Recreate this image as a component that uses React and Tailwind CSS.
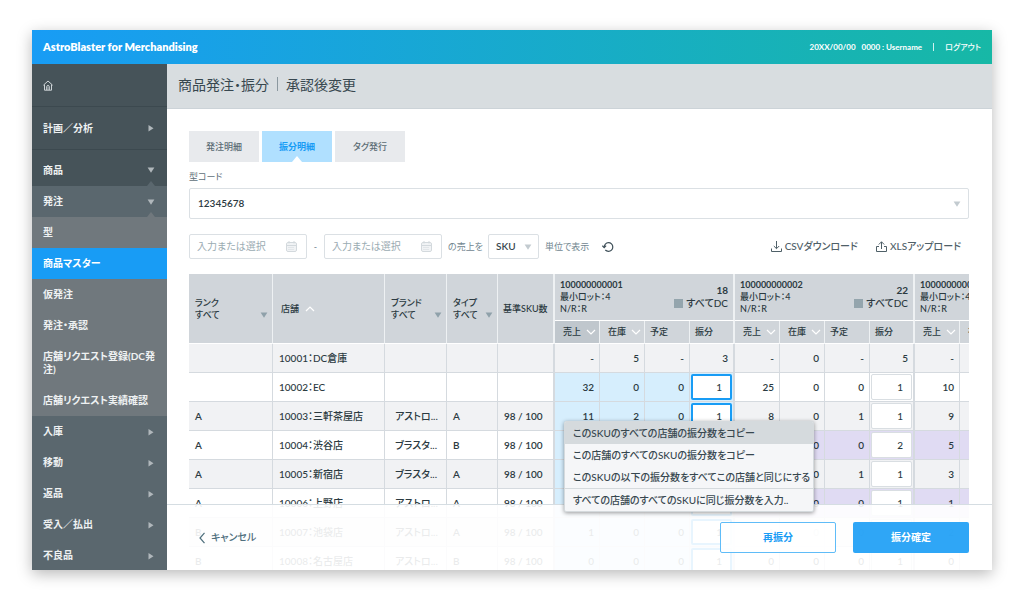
import React from "react";

const NAV = [
  { label: "計画／分析", arrow: "right", level: 0 },
  { label: "商品", arrow: "down", level: 1 },
  { label: "発注", arrow: "down", level: 2 },
  { label: "型", level: 3 },
  { label: "商品マスター", level: 3, active: true },
  { label: "仮発注", level: 3 },
  { label: "発注・承認", level: 3 },
  { label: "店舗リクエスト登録(DC発注)", level: 3 },
  { label: "店舗リクエスト実績確認", level: 3 },
  { label: "入庫", arrow: "right", level: 2 },
  { label: "移動", arrow: "right", level: 2 },
  { label: "返品", arrow: "right", level: 2 },
  { label: "受入／払出", arrow: "right", level: 2 },
  { label: "不良品", arrow: "right", level: 2 },
];

const LEVEL = {
  0: "min-h-[43px] bg-[#465359] border-b border-[#3c494f]",
  1: "min-h-[36px] pt-1 bg-[#465359]",
  2: "min-h-[31px] bg-[#5a676e]",
  3: "min-h-[31px] py-[9px] bg-[#70787d]",
};

function Triangle({ dir = "down", className = "" }) {
  return (
    <svg viewBox="0 0 8 8" className={"h-2 w-2 shrink-0 " + className} fill="currentColor" aria-hidden="true">
      {dir === "right" && <path d="M1.5 1l5 3.2-5 3.2z" />}
      {dir === "down" && <path d="M.6 1.4h6.8L4 6.8z" />}
    </svg>
  );
}

function Chevron({ up }) {
  return (
    <svg viewBox="0 0 10 6" className="h-1.5 w-2.5 shrink-0" fill="none" stroke="#fff" strokeWidth="1.2" aria-hidden="true">
      <path d={up ? "M1 5l4-4 4 4" : "M1 1l4 4 4-4"} />
    </svg>
  );
}

function HomeIcon() {
  return (
    <svg viewBox="0 0 10 11" className="h-[11px] w-[10px]" fill="none" stroke="#cfd5d8" strokeWidth="1" aria-hidden="true">
      <path d="M.4 5.2L5 1l4.6 4.2M1.5 4.6v5.6h7V4.6" />
      <path d="M3.7 10V6.8a1.3 1.3 0 012.6 0V10" />
      <path d="M5 7v3" strokeWidth=".6" />
    </svg>
  );
}

function Sidebar() {
  return (
    <nav className="w-[135px] shrink-0 overflow-hidden bg-[#5a676e] text-[10px] font-bold leading-[13px] text-[#eef1f2]">
      <a href="#home" aria-label="ホーム" className="flex h-[43px] items-center border-b border-[#3c494f] bg-[#465359] px-[11px]">
        <HomeIcon />
      </a>
      {NAV.map((n) => (
        <a
          key={n.label}
          href="#menu"
          className={"relative flex items-center justify-between pl-[11px] " + (n.arrow ? "pr-3 " : "pr-2 ") + LEVEL[n.level] + (n.active ? " bg-[#189cf5]! text-white" : "")}
        >
          <span className="break-all">{n.label}</span>
          {n.arrow && <Triangle dir={n.arrow} className="text-[#b0b7bb]" />}
          {n.arrow === "down" && (
            <svg viewBox="0 0 8 5" className={"absolute bottom-0 right-3 h-[5px] w-2 " + (n.level === 1 ? "text-[#5a676e]" : "text-[#70787d]")} fill="currentColor" aria-hidden="true">
              <path d="M0 5l4-5 4 5z" />
            </svg>
          )}
        </a>
      ))}
    </nav>
  );
}

function Tabs() {
  const base = "relative h-[31px] w-[70px] text-[9px] ";
  return (
    <div className="flex gap-[3px]" role="tablist">
      <button role="tab" aria-selected="false" className={base + "bg-[#e8eaed] font-medium text-[#5b6c74]"}>発注明細</button>
      <button role="tab" aria-selected="true" className={base + "bg-[#b0e0ff] font-bold text-[#189cf5]"}>
        振分明細
        <svg viewBox="0 0 10 6" className="absolute bottom-0 left-[30px] h-1.5 w-2.5" fill="#fff" aria-hidden="true">
          <path d="M0 6l5-6 5 6z" />
        </svg>
      </button>
      <button role="tab" aria-selected="false" className={base + "bg-[#e8eaed] font-medium text-[#5b6c74]"}>タグ発行</button>
    </div>
  );
}

function DateBox({ label }) {
  return (
    <div className="flex h-[25px] w-[118px] items-center rounded-xs border border-[#dbe0e4] pl-[7px] pr-[9px]">
      <input aria-label={label} placeholder="入力または選択" className="min-w-0 flex-1 text-[10px] text-[#37474f] outline-none placeholder:text-[#9aabb2]" />
      <svg viewBox="0 0 11 11" className="h-[11px] w-[11px] shrink-0" fill="none" stroke="#d3d9dd" aria-hidden="true">
        <rect x=".5" y="1.5" width="10" height="9" rx="1.5" fill="#f1f3f5" />
        <path d="M.5 4.5h10M3 0v2.5M8 0v2.5" />
        <path d="M2.5 6.5h6M2.5 8.5h6" strokeDasharray="1 1" />
      </svg>
    </div>
  );
}

function Filters() {
  return (
    <div className="mt-[15px] flex h-[25px] items-center text-[9px] text-[#718690]">
      <DateBox label="開始日" />
      <span className="w-[17px] text-center">-</span>
      <DateBox label="終了日" />
      <span className="ml-1.5 w-10 whitespace-nowrap">の売上を</span>
      <div className="relative">
        <select aria-label="表示単位" className="h-[25px] w-[51px] appearance-none rounded-xs border border-[#dbe0e4] pl-[7px] text-[10px] font-semibold text-[#3b4a51]">
          <option>SKU</option>
        </select>
        <Triangle className="pointer-events-none absolute right-[7px] top-[9px] text-[#c3cbd0]" />
      </div>
      <span className="ml-1.5 whitespace-nowrap">単位で表示</span>
      <button aria-label="リセット" className="ml-[13px] text-[#3f5059]">
        <svg viewBox="0 0 12 12" className="h-3 w-3" fill="none" stroke="currentColor" strokeWidth="1.2" aria-hidden="true">
          <path d="M2.2 6.2A4.3 4.3 0 116.4 10.3a4.3 4.3 0 01-3.1-1.3" />
          <path d="M.4 4.7l1.8 2 1.9-2" />
        </svg>
      </button>
      <div className="ml-auto flex gap-[18px] pr-2 text-[10px] font-medium text-[#4f6068]">
        <button className="flex items-center gap-[3px] whitespace-nowrap">
          <svg viewBox="0 0 11 11" className="h-[11px] w-[11px]" fill="none" stroke="currentColor" aria-hidden="true">
            <path d="M5.5 0v7.5M2.8 5l2.7 2.7L8.2 5M.5 7.5v3h10v-3" />
          </svg>
          CSVダウンロード
        </button>
        <button className="flex items-center gap-[3px] whitespace-nowrap">
          <svg viewBox="0 0 11 11" className="h-[11px] w-[11px]" fill="none" stroke="currentColor" aria-hidden="true">
            <path d="M5.5 8V.8M2.8 3.5L5.5.8l2.7 2.7M3 5.5H.5v5h10v-5H8" />
          </svg>
          XLSアップロード
        </button>
      </div>
    </div>
  );
}

const GROUPS = [
  { code: "100000000001", total: 18 },
  { code: "100000000002", total: 22 },
  { code: "100000000003", total: 20 },
];

const ROWS = [
  { shop: "10001：DC倉庫", cells: [["-", "5", "-", "3"], ["-", "0", "-", "5"], ["-", "0", "-", "4"]], fixed: true },
  { shop: "10002：EC", cells: [["32", "0", "0", "1"], ["25", "0", "0", "1"], ["10", "0", "0", "1"]] },
  { rank: "A", shop: "10003：三軒茶屋店", brand: "アストロ...", type: "A", cells: [["11", "2", "0", "1"], ["8", "0", "1", "1"], ["9", "0", "0", "1"]] },
  { rank: "A", shop: "10004：渋谷店", brand: "ブラスタ...", type: "B", mark: true, cells: [["8", "0", "0", "1"], ["6", "0", "0", "2"], ["5", "0", "0", "1"]] },
  { rank: "A", shop: "10005：新宿店", brand: "ブラスタ...", type: "A", cells: [["6", "0", "0", "1"], ["4", "0", "1", "1"], ["3", "0", "0", "1"]] },
  { rank: "A", shop: "10006：上野店", brand: "アストロ...", type: "A", mark: true, cells: [["3", "0", "0", "1"], ["2", "0", "0", "1"], ["1", "0", "0", "1"]] },
  { rank: "B", shop: "10007：池袋店", brand: "アストロ...", type: "A", cells: [["1", "0", "0", "1"], ["1", "0", "0", "1"], ["2", "0", "0", "1"]] },
  { rank: "B", shop: "10008：名古屋店", brand: "アストロ...", type: "B", cells: [["0", "0", "0", "1"], ["0", "0", "0", "1"], ["0", "0", "0", "1"]] },
];

const WIDTHS = ["w-[84px]", "w-[112px]", "w-[62px]", "w-[51px]", "w-[57px]"];
const SUBS = ["売上", "在庫", "予定", "振分"];
const TH = "border-b border-r border-b-white border-r-[#eef1f3] bg-[#d0d5da] text-left text-[9px] font-medium leading-3 ";
const TD = "border-b border-r border-[#d5dadf] ";

function FilterHead({ name }) {
  return (
    <th rowSpan={2} className={TH + "px-1.5"}>
      <div className="flex items-end justify-between">
        <span>{name}<br />すべて</span>
        <Triangle className="-mr-0.5 mb-0.5 text-[#8fa1aa]" />
      </div>
    </th>
  );
}

function ContextMenu() {
  const item = "block w-full whitespace-nowrap px-2 text-left ";
  return (
    <div role="menu" className="absolute left-[375px] top-[147px] z-20 w-[250px] overflow-hidden rounded-xs border border-[#d5dadd] bg-[#f5f6f8] text-[10px] font-medium leading-[22px] text-[#37474f] shadow-[0_1px_4px_rgba(0,0,0,0.4)]">
      <button role="menuitem" className={item + "bg-[#d5dadd]"}>このSKUのすべての店舗の振分数をコピー</button>
      <button role="menuitem" className={item}>この店舗のすべてのSKUの振分数をコピー</button>
      <button role="menuitem" className={item + "border-b border-[#d5dadd]"}>このSKUの以下の振分数をすべてこの店舗と同じにする</button>
      <button role="menuitem" className={item}>すべての店舗のすべてのSKUに同じ振分数を入力..</button>
    </div>
  );
}

function AllocationTable() {
  return (
    <table className="w-[906px] table-fixed border-separate border-spacing-0 text-[10px] font-semibold text-[#2b3a41]">
      <colgroup>
        {WIDTHS.map((w) => <col key={w} className={w} />)}
        {GROUPS.flatMap((g) => SUBS.map((s) => <col key={g.code + s} className="w-[45px]" />))}
      </colgroup>
      <thead>
        <tr className="h-[47px]">
          <FilterHead name="ランク" />
          <th rowSpan={2} className={TH + "px-2"}>
            <span className="flex items-center gap-1.5">店舗 <Chevron up /></span>
          </th>
          <FilterHead name="ブランド" />
          <FilterHead name="タイプ" />
          <th rowSpan={2} className={TH + "whitespace-nowrap border-r-2 px-[5px]"}>基準SKU数</th>
          {GROUPS.map((g) => (
            <th key={g.code} colSpan={4} className={TH + "border-r-2 px-[5px]"}>
              <div className="flex justify-between">
                <div>
                  <div className="font-bold">{g.code}</div>
                  <div>最小ロット：4</div>
                  <div>N/R：R</div>
                </div>
                <div className="mt-[5px] text-right text-[10px] leading-[13px]">
                  <div className="font-bold">{g.total}</div>
                  <div className="flex items-center gap-[3px]">
                    <span className="h-[9px] w-[9px] bg-[#94a5ad]" />すべてDC
                  </div>
                </div>
              </div>
            </th>
          ))}
        </tr>
        <tr className="h-[23px]">
          {GROUPS.flatMap((g, gi) =>
            SUBS.map((s, i) => (
              <th key={g.code + s} className={TH + (i < 2 ? "pl-2 " : "pl-[5px] ") + (i === 3 ? "border-r-2 " : "") + (gi === 0 && i === 0 ? "bg-[#c0c7cd]!" : "")}>
                <span className="flex items-center gap-[5px]">{s}{i < 2 && <Chevron />}</span>
              </th>
            ))
          )}
        </tr>
      </thead>
      <tbody>
        {ROWS.map((r, ri) => (
          <tr key={r.shop} className={"h-[29px] whitespace-nowrap " + (ri % 2 ? "bg-white" : "bg-[#f1f2f4]")}>
            <td className={TD + "px-1.5"}>{r.rank}</td>
            <td className={TD + "px-1.5 font-medium"}>{r.shop}</td>
            <td className={TD + "pl-[10px] font-medium"}>{r.brand}</td>
            <td className={TD + "px-1.5"}>{r.type}</td>
            <td className={TD + "border-r-2 pl-1.5"}>{r.rank && "98 / 100"}</td>
            {r.cells.flatMap((c, gi) =>
              c.map((v, i) => {
                const tone = r.fixed ? "" : gi === 0 ? "bg-[#d6eefd] " : r.mark ? "bg-[#e0dbf3] " : "";
                if (i < 3 || r.fixed)
                  return <td key={gi + "-" + i} className={TD + tone + "pr-[5px] text-right " + (i === 3 ? "border-r-2" : "")}>{v}</td>;
                return (
                  <td key={gi + "-" + i} className={TD + tone + "border-r-2 px-px"}>
                    <input
                      aria-label={r.shop + " 振分 " + GROUPS[gi].code}
                      defaultValue={v}
                      className={"block h-[26px] w-full rounded-xs bg-white pr-2 text-right font-medium " + (gi === 0 ? "border-2 border-[#189cf5]" : "border border-[#d9dee2]")}
                    />
                  </td>
                );
              })
            )}
          </tr>
        ))}
      </tbody>
    </table>
  );
}

export default function App() {
  return (
    <div className="h-screen bg-white px-8 py-[30px] font-['Lato','Noto_Sans_CJK_JP',sans-serif] [font-feature-settings:'palt']">
      <div className="flex h-full flex-col bg-white shadow-[0_4px_14px_rgba(0,0,0,0.28)]">
        <header className="flex h-[34px] shrink-0 items-center justify-between bg-linear-to-r/srgb from-[#189cf5] to-[#17b8a6] px-[11px] text-white">
          <strong className="text-[11px] font-extrabold">AstroBlaster for Merchandising</strong>
          <div className="flex items-center text-[8px] font-bold">
            <span>20XX/00/00</span>
            <span className="ml-1.5">0000 : Username</span>
            <span className="mx-[11px] h-2 w-px bg-white/80" />
            <a href="#logout" className="font-medium">ログアウト</a>
          </div>
        </header>
        <div className="flex min-h-0 flex-1">
          <Sidebar />
          <main className="relative flex min-w-0 flex-1 flex-col">
            <h1 className="flex h-[45px] shrink-0 items-center border-b border-[#ccd3d8] bg-[#d8dde0] px-[11px] pb-1 text-[14px] text-[#37474f]">
              商品発注・振分
              <span className="mx-2 h-3.5 w-px bg-[#8b989f]" />
              承認後変更
            </h1>
            <div className="flex min-h-0 flex-1 flex-col pl-[22px] pr-[23px] pt-[22px]">
              <Tabs />
              <label htmlFor="model" className="mt-2 text-[9px] leading-[14px] text-[#5f7079]">型コード</label>
              <div className="relative mt-1">
                <select id="model" className="block h-[31px] w-full appearance-none rounded-xs border border-[#dbe0e4] pl-2 text-[10px] font-semibold text-[#2b3a41]">
                  <option>12345678</option>
                </select>
                <Triangle className="pointer-events-none absolute right-2 top-3 text-[#c3cbd0]" />
              </div>
              <Filters />
              <div className="relative mt-[15px] min-h-0 flex-1 overflow-hidden">
                <AllocationTable />
                <ContextMenu />
              </div>
            </div>
            <footer className="absolute inset-x-0 bottom-0 z-10 flex h-[66px] items-center gap-[17px] border-t border-[#d5dde2] bg-white/90 pl-8 pr-[23px] text-[10px] font-bold">
              <button className="mr-auto flex items-center gap-1.5 font-medium text-[#4f6f7d]">
                <svg viewBox="0 0 6 12" className="h-3 w-1.5" fill="none" stroke="currentColor" strokeWidth="1.2" aria-hidden="true">
                  <path d="M5.5.8L1 6l4.5 5.2" />
                </svg>
                キャンセル
              </button>
              <button className="h-[31px] w-[116px] rounded-xs border border-[#5fbcf8] bg-white/85 text-[#189cf5]">再振分</button>
              <button className="h-[31px] w-[116px] rounded-xs bg-[#189cf5]/90 text-white">振分確定</button>
            </footer>
          </main>
        </div>
      </div>
    </div>
  );
}
